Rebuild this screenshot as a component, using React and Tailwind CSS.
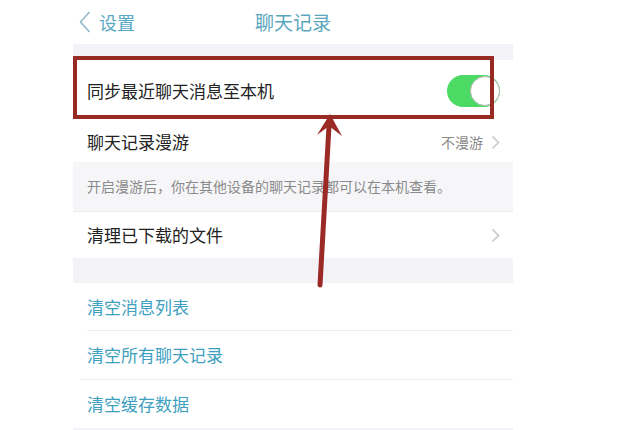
import { useState } from "react";

const font = { fontFamily: '"Noto Sans CJK SC", "Noto Sans", sans-serif' };

function Chevron() {
  return (
    <svg width="9" height="15" viewBox="0 0 9 15" className="shrink-0">
      <path d="M1.5 1.5 L7.5 7.5 L1.5 13.5" fill="none" stroke="#c8c8cd" strokeWidth="1.6" />
    </svg>
  );
}

function Toggle({ on, onClick }) {
  return (
    <button
      onClick={onClick}
      className={`relative w-[53px] h-[32px] rounded-full shrink-0 ${on ? "bg-[#4cd964]" : "bg-[#e5e5ea]"}`}
    >
      <span
        className={`absolute top-[1px] w-[30px] h-[30px] rounded-full bg-white border border-[#b8b8b8] ${on ? "right-0" : "left-0"}`}
      />
    </button>
  );
}

export default function App() {
  const [sync, setSync] = useState(true);

  return (
    <div className="relative w-[631px] h-[430px] bg-white overflow-hidden" style={font}>
      <div className="ml-[73px] w-[440px] flex flex-col">
        {/* Nav bar */}
        <div className="relative h-[44px] flex items-center">
          <div className="flex items-center gap-[8px] pl-[6px] text-[#58a9c3]">
            <svg width="12" height="22" viewBox="0 0 12 22">
              <path d="M10.5 1 L1.5 11 L10.5 21" fill="none" stroke="#8fb7c6" strokeWidth="1.5" />
            </svg>
            <span className="text-[18px]">设置</span>
          </div>
          <div className="absolute inset-x-0 text-center text-[19px] text-[#5aa6bd] pointer-events-none">
            聊天记录
          </div>
        </div>

        <div className="h-[16px] bg-[#f3f3f7]" />

        {/* Sync row */}
        <div className="h-[62px] bg-white flex items-center justify-between pl-[14px] pr-[13px]">
          <span className="text-[17px] text-[#222]">同步最近聊天消息至本机</span>
          <Toggle on={sync} onClick={() => setSync(!sync)} />
        </div>

        {/* Roaming row */}
        <div className="h-[40px] bg-white flex items-center justify-between pl-[14px] pr-[13px]">
          <span className="text-[17px] text-[#222]">聊天记录漫游</span>
          <div className="flex items-center gap-[8px]">
            <span className="text-[14px] text-[#8a8a8a]">不漫游</span>
            <Chevron />
          </div>
        </div>

        <div className="h-[49px] bg-[#f6f6f8] flex items-center pl-[14px]">
          <span className="text-[14px] text-[#8a8a8a]">开启漫游后，你在其他设备的聊天记录都可以在本机查看。</span>
        </div>

        <div className="h-[47px] bg-white flex items-center justify-between pl-[14px] pr-[13px] border-t border-[#eeeeee]">
          <span className="text-[17px] text-[#222]">清理已下载的文件</span>
          <Chevron />
        </div>

        <div className="h-[25px] bg-[#f3f3f7]" />

        {/* Clear actions */}
        <div className="bg-white flex flex-col">
          <div className="h-[47px] flex items-center pl-[14px]">
            <span className="text-[17px] text-[#3e9fc1]">清空消息列表</span>
          </div>
          <div className="ml-[14px] h-px bg-[#ececec]" />
          <div className="h-[48px] flex items-center pl-[14px]">
            <span className="text-[17px] text-[#3e9fc1]">清空所有聊天记录</span>
          </div>
          <div className="ml-[7px] h-px bg-[#ececec]" />
          <div className="h-[48px] flex items-center pl-[14px]">
            <span className="text-[17px] text-[#3e9fc1]">清空缓存数据</span>
          </div>
        </div>
        <div className="h-[10px] bg-[#f3f3f7]" />
      </div>

      {/* Annotation: highlight box */}
      <div className="absolute left-[73px] top-[56px] w-[421px] h-[63px] border-[4px] border-[#982a24] pointer-events-none" />

      {/* Annotation: arrow */}
      <svg className="absolute left-0 top-0 pointer-events-none" width="631" height="430">
        <line x1="320" y1="285" x2="329" y2="126" stroke="#9b2a26" strokeWidth="5" strokeLinecap="round" />
        <polygon points="330,114 317,135 329,126 342,136" fill="#9b2a26" />
      </svg>
    </div>
  );
}
